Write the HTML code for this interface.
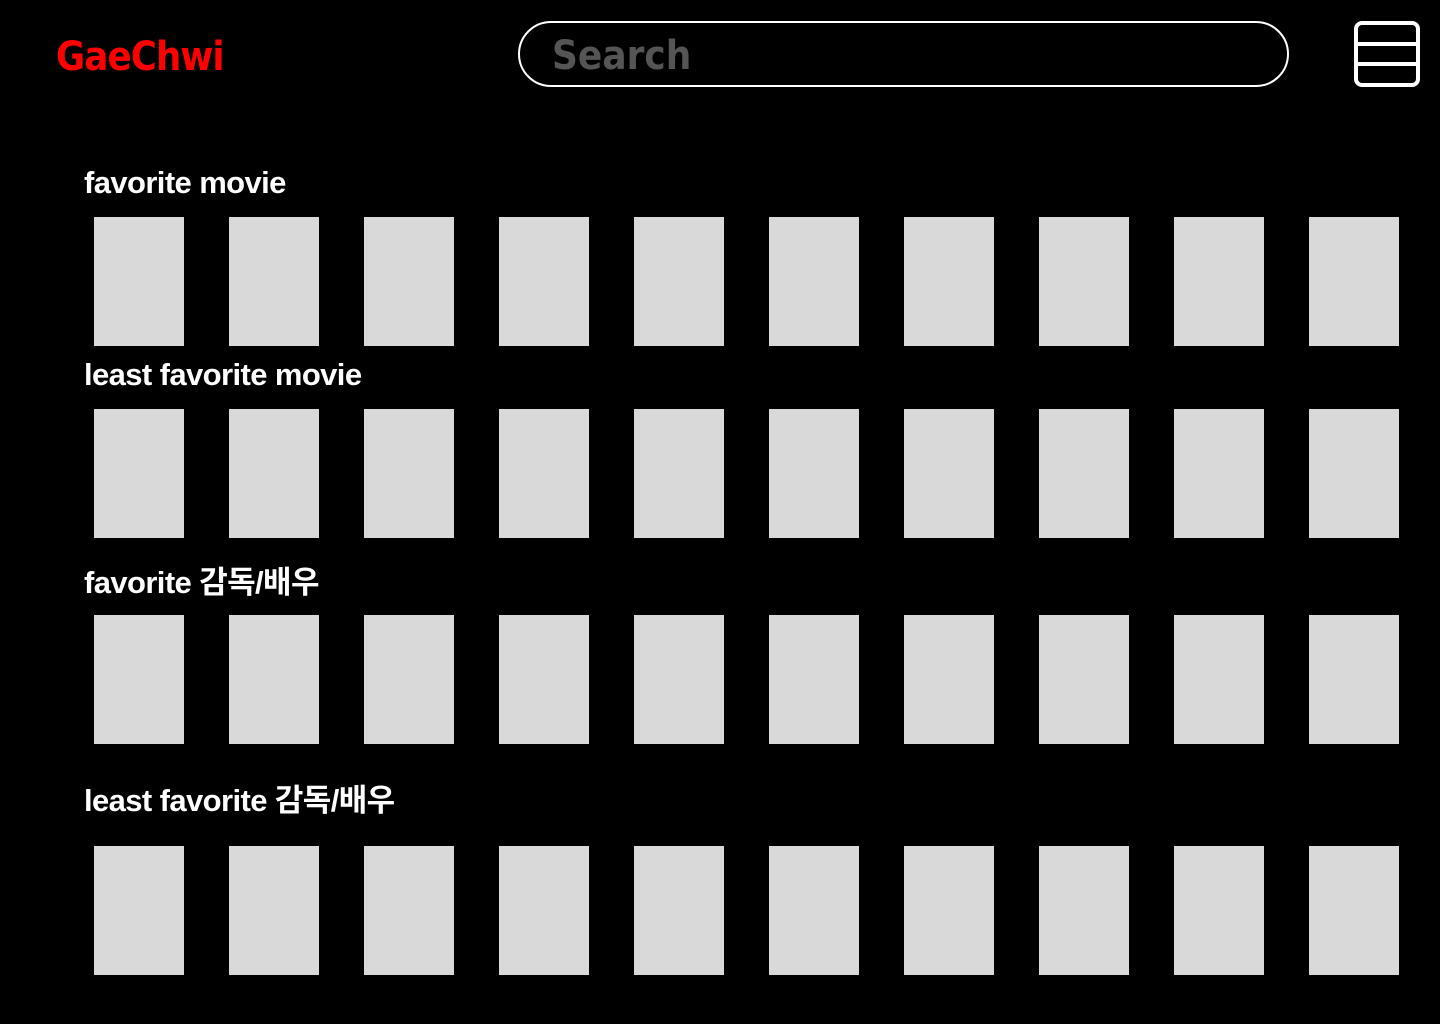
<!DOCTYPE html>
<html><head><meta charset="utf-8"><style>
body{margin:0;width:1440px;height:1024px;background:#000;position:relative;overflow:hidden;font-family:"Liberation Sans","Noto Sans CJK KR",sans-serif}
.logo{position:absolute;left:56px;top:34px;color:#f00;font:bold 40px "DejaVu Sans","Liberation Sans",sans-serif;letter-spacing:-1px;transform:scaleX(0.89);transform-origin:left}
.search{position:absolute;left:518px;top:21px;width:767px;height:62px;border:2.5px solid #fff;border-radius:34px}
.search span{position:absolute;left:32px;top:10px;color:#555;font:bold 40px "DejaVu Sans",sans-serif;transform:scaleX(0.9);transform-origin:left}
.menu{position:absolute;left:1354px;top:21px;width:58px;height:58px;border:4px solid #fff;border-radius:8px}
.menu i{position:absolute;left:0;right:0;height:4px;background:#fff}
.lbl{position:absolute;left:84px;color:#fff;font-size:31px;font-weight:bold;letter-spacing:-0.6px}
.c{position:absolute;width:90px;height:129px;background:#d9d9d9}
</style></head><body>
<div class="logo">GaeChwi</div>
<div class="search"><span>Search</span></div>
<div class="menu"><i style="top:17px"></i><i style="top:37px"></i></div>
<div class="lbl" style="top:165px">favorite movie</div>
<div class="lbl" style="top:357px">least favorite movie</div>
<div class="lbl" style="top:557px">favorite 감독/배우</div>
<div class="lbl" style="top:775px">least favorite 감독/배우</div>
<div id="g"></div>
<script>
var ys=[217,409,615,846],h='';
ys.forEach(function(y){for(var i=0;i<10;i++)h+='<div class="c" style="left:'+(94+135*i)+'px;top:'+y+'px"></div>';});
document.getElementById('g').innerHTML=h;
</script>
</body></html>
